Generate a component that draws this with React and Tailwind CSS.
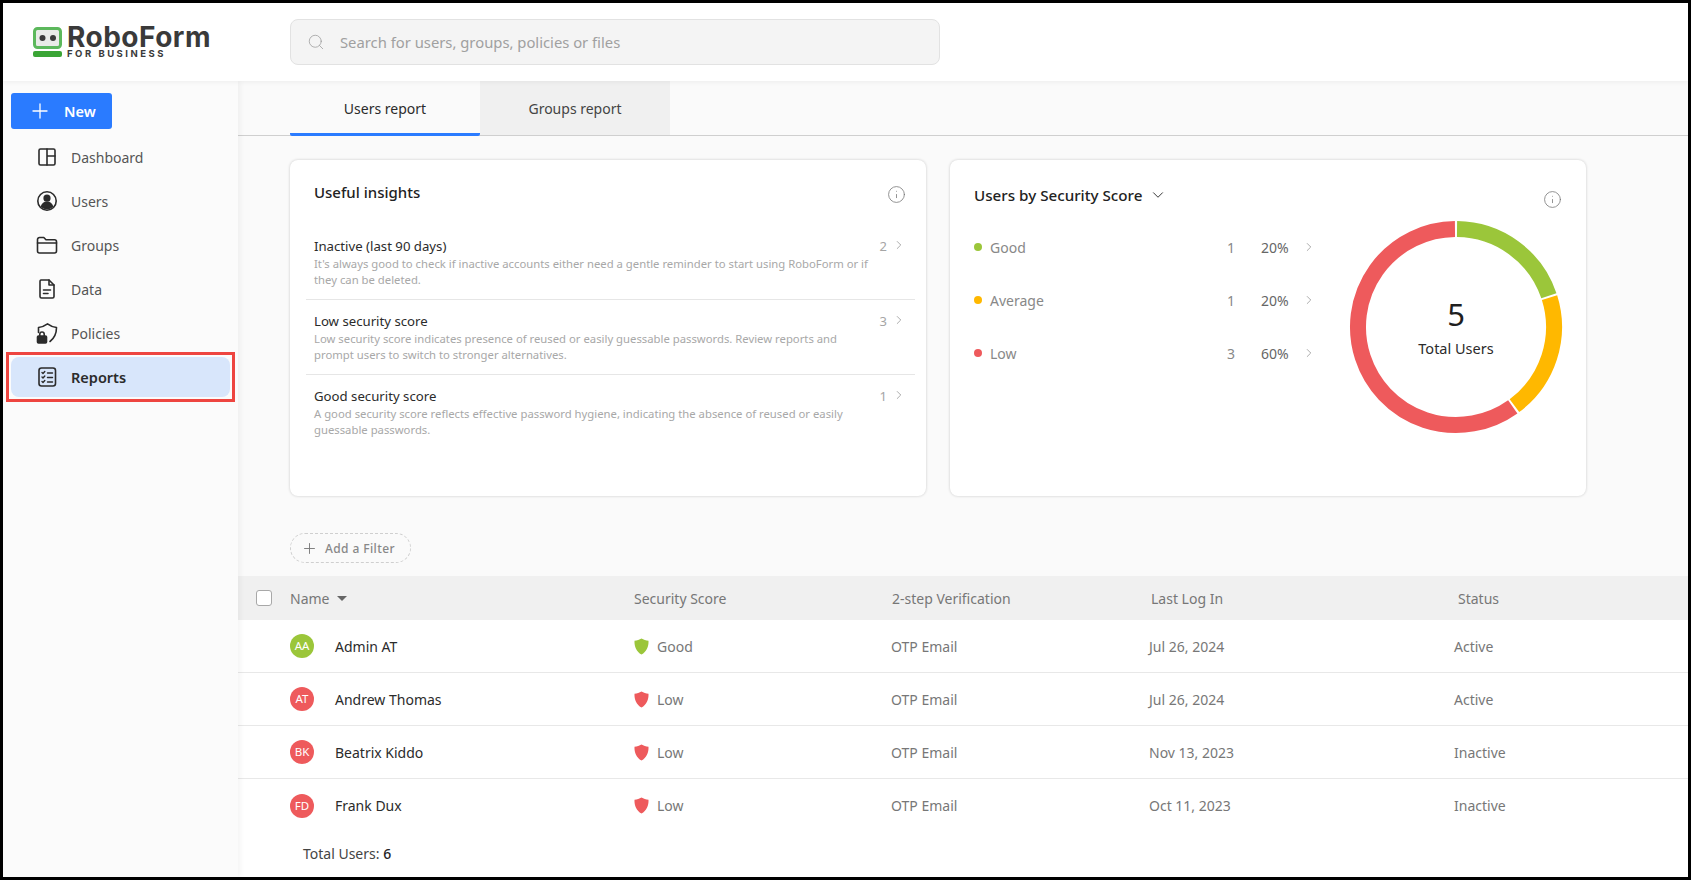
import { ChevronDown, ChevronRight, Info, Plus, Search } from 'lucide-react';

const insights = [
    { title: 'Inactive (last 90 days)', count: 2, text: "It's always good to check if inactive accounts either need a gentle reminder to start using RoboForm or if they can be deleted." },
    { title: 'Low security score', count: 3, text: 'Low security score indicates presence of reused or easily guessable passwords. Review reports and prompt users to switch to stronger alternatives.' },
    { title: 'Good security score', count: 1, text: 'A good security score reflects effective password hygiene, indicating the absence of reused or easily guessable passwords.' },
];

const scores = [
    { label: 'Good', count: 1, pct: '20%', dot: 'bg-[#9bc63a]' },
    { label: 'Average', count: 1, pct: '20%', dot: 'bg-[#ffb800]' },
    { label: 'Low', count: 3, pct: '60%', dot: 'bg-[#ee5a5c]' },
];

const users = [
    { initials: 'AA', name: 'Admin AT', score: 'Good', login: 'Jul 26, 2024', status: 'Active' },
    { initials: 'AT', name: 'Andrew Thomas', score: 'Low', login: 'Jul 26, 2024', status: 'Active' },
    { initials: 'BK', name: 'Beatrix Kiddo', score: 'Low', login: 'Nov 13, 2023', status: 'Inactive' },
    { initials: 'FD', name: 'Frank Dux', score: 'Low', login: 'Oct 11, 2023', status: 'Inactive' },
];

function Logo() {
    return (
        <div className="flex items-start gap-[4px]">
            <svg width="30" height="31" viewBox="0 0 30 31" className="mt-[1px]">
                <rect x="1.5" y="1.5" width="26" height="19" rx="3" fill="#e9ebe8" stroke="#5cb85c" strokeWidth="3" />
                <circle cx="9.5" cy="11" r="3" fill="#3a3a3a" />
                <circle cx="20" cy="11" r="3" fill="#3a3a3a" />
                <rect x="0" y="24" width="29" height="6" rx="2" fill="#3aa535" />
            </svg>
            <div className="flex flex-col">
                <span className="font-['Inter',sans-serif] text-[28px] leading-[23px] font-bold tracking-[0.5px] text-[#3a3a3a]">RoboForm</span>
                <span className="font-['Inter',sans-serif] text-[9.5px] leading-[9px] font-bold tracking-[2.5px] text-[#3a3a3a]">FOR BUSINESS</span>
            </div>
        </div>
    );
}

function NavIcon({ name }) {
    const common = { width: 24, height: 24, viewBox: '0 0 24 24', fill: 'none', stroke: '#2b2b2b', strokeWidth: 1.6, strokeLinecap: 'round', strokeLinejoin: 'round' };
    if (name === 'dashboard') {
        return (
            <svg {...common}>
                <rect x="4" y="4" width="16" height="16" rx="1.5" />
                <path d="M12 4v16M12 11h8" />
            </svg>
        );
    }
    if (name === 'users') {
        return (
            <svg {...common}>
                <circle cx="12" cy="12" r="9.2" />
                <circle cx="12" cy="9.2" r="2.8" fill="#2b2b2b" />
                <path d="M6.5 17.5c1-3 3-4.200 5.500-4.200s4.500 1.200 5.500 4.200c-1.500 1.400-3.400 2.200-5.500 2.200s-4-.8-5.500-2.200z" fill="#2b2b2b" />
            </svg>
        );
    }
    if (name === 'groups') {
        return (
            <svg {...common}>
                <path d="M2.500 18V6.500A2 2 0 0 1 4.500 4.500h4.300l2.200 2.300h8.500a2 2 0 0 1 2 2V18a2 2 0 0 1-2 2H4.500a2 2 0 0 1-2-2z" />
                <path d="M2.500 10h19" />
            </svg>
        );
    }
    if (name === 'data') {
        return (
            <svg {...common}>
                <path d="M6 3h8l5 5v11.500A1.500 1.500 0 0 1 17.500 21h-11A1.500 1.500 0 0 1 5 19.500v-15A1.500 1.500 0 0 1 6 3z" />
                <path d="M14 3v5h5M8.500 13h7M8.500 16.500h4.500" />
            </svg>
        );
    }
    if (name === 'policies') {
        return (
            <svg {...common}>
                <path d="M3.500 11.500V6.500C7 6 9.500 5 12.500 2.800 15.500 5 18 6 21.500 6.500c0 6-2 10.500-6.500 14" />
                <rect x="2.500" y="15" width="9" height="7" rx="1" fill="#2b2b2b" />
                <path d="M4.800 15v-1.800a2.200 2.200 0 0 1 4.400 0V15" />
            </svg>
        );
    }
    return (
        <svg {...common}>
            <rect x="4" y="3" width="16.500" height="18" rx="2.500" />
            <path d="M7 7.500l1 1 1.800-2M7 12l1 1 1.800-2M7 16.500l1 1 1.800-2M12.500 8h5M12.500 12.500h5M12.500 17h5" strokeWidth="1.400" />
        </svg>
    );
}

function Shield({ className }) {
    return (
        <svg width="15" height="17" viewBox="0 0 15 17" className={className}>
            <path d="M7.500 0.500C9.500 1.800 12 2.500 14.500 2.700c0.300 6-2 11-7 13.800C2.500 13.700 0.200 8.700 0.500 2.700 3 2.500 5.500 1.800 7.500 0.500z" fill="currentColor" />
        </svg>
    );
}

function arc(start, end, r = 98, c = 108) {
    const p = (a) => {
        const rad = (a * Math.PI) / 180;
        return `${(c + r * Math.sin(rad)).toFixed(2)} ${(c - r * Math.cos(rad)).toFixed(2)}`;
    };
    return `M${p(start)} A${r} ${r} 0 ${end - start > 180 ? 1 : 0} 1 ${p(end)}`;
}

function Donut() {
    return (
        <div className="relative w-[216px] h-[216px]">
            <svg width="216" height="216" viewBox="0 0 216 216" fill="none" strokeWidth="16">
                <path d={arc(0.6, 71.4)} stroke="#9bc63a" />
                <path d={arc(72.6, 143.4)} stroke="#ffb800" />
                <path d={arc(144.6, 359.4)} stroke="#ee5a5c" />
            </svg>
            <div className="absolute inset-0 flex flex-col items-center pt-[75px]">
                <span className="text-[31px] leading-[40px] text-[#1f1f1f]">5</span>
                <span className="text-[14.5px] leading-[20px] mt-[4px] text-[#2b2b2b]">Total Users</span>
            </div>
        </div>
    );
}

function Sidebar() {
    const items = [
        ['dashboard', 'Dashboard'],
        ['users', 'Users'],
        ['groups', 'Groups'],
        ['data', 'Data'],
        ['policies', 'Policies'],
    ];
    return (
        <aside className="w-[235px] shrink-0 bg-[#fbfbfb] shadow-[2px_0_6px_rgba(0,0,0,0.05)] z-10 pt-3 pl-[3px]">
            <button className="ml-[5px] w-[101px] h-9 bg-[#2a7bff] rounded-[3px] flex items-center text-white text-[14.5px] font-semibold">
                <Plus size={24} strokeWidth={1.3} className="ml-[17px]" />
                <span className="ml-[12px] mt-[1px]">New</span>
            </button>
            <nav className="mt-2 flex flex-col gap-1">
                {items.map(([icon, label]) => (
                    <a key={label} className="h-10 flex items-center pl-[29px] text-[14px] text-[#555]">
                        <NavIcon name={icon} />
                        <span className="ml-[12px]">{label}</span>
                    </a>
                ))}
                <div className="-my-[5px] border-[3px] border-[#ee4540] p-[2px] w-[229px]">
                    <a className="h-10 flex items-center pl-[24px] bg-[#d8e6fb] rounded-lg text-[14.5px] font-semibold text-[#2b2b2b]">
                        <NavIcon name="reports" />
                        <span className="ml-[12px] mt-[1px]">Reports</span>
                    </a>
                </div>
            </nav>
        </aside>
    );
}

function InsightsCard() {
    return (
        <section className="w-[636px] h-[336px] bg-white rounded-lg shadow-[0_0_3px_rgba(0,0,0,0.2)] pt-[21px] pl-[16px] pr-[11px] relative">
            <div className="flex justify-between pl-[8px]">
                <h2 className="text-[15px] leading-[22px] font-medium text-[#222]">Useful insights</h2>
                <Info size={19} strokeWidth={1} className="text-[#777] mt-[4px] mr-[9px]" />
            </div>
            <div className="mt-[21px]">
                {insights.map((item, i) => (
                    <div key={item.title} className={`h-[75px] pl-[8px] pr-[9px] pt-[12px] flex justify-between ${i < 2 ? 'border-b border-[#e6e6e6]' : ''}`}>
                        <div className="w-[556px]">
                            <div className="text-[13.2px] leading-[18px] text-[#2b2b2b]">{item.title}</div>
                            <p className="text-[11.3px] leading-[16px] text-[#a8a8a8] mt-[1px]">{item.text}</p>
                        </div>
                        <div className="flex items-start text-[13px] leading-[18px] text-[#a5a5a5]">
                            <span>{item.count}</span>
                            <ChevronRight size={14} strokeWidth={1.2} className="ml-[5px] mt-[1px] text-[#888]" />
                        </div>
                    </div>
                ))}
            </div>
        </section>
    );
}

function ScoreCard() {
    return (
        <section className="w-[636px] h-[336px] bg-white rounded-lg shadow-[0_0_3px_rgba(0,0,0,0.2)] pl-[24px] pr-[23px] pt-[24px] flex justify-between">
            <div>
                <div className="flex items-center">
                    <h2 className="text-[15.2px] leading-[22px] font-medium text-[#222]">Users by Security Score</h2>
                    <ChevronDown size={18} strokeWidth={1.3} className="ml-[7px] text-[#333]" />
                </div>
                <div className="mt-[31px] flex flex-col gap-[33px] w-[346px]">
                    {scores.map((s) => (
                        <div key={s.label} className="h-5 flex items-center text-[14px] text-[#888]">
                            <span className={`w-2 h-2 rounded-full ${s.dot}`} />
                            <span className="ml-2 w-[237px]">{s.label}</span>
                            <span className="w-[34px]">{s.count}</span>
                            <span className="w-[41px] text-[#666]">{s.pct}</span>
                            <ChevronRight size={14} strokeWidth={1.2} className="text-[#888]" />
                        </div>
                    ))}
                </div>
            </div>
            <div className="flex flex-col items-end">
                <Info size={19} strokeWidth={1} className="text-[#777] mt-[6px] mr-[1px]" />
                <div className="mt-[10px] mr-[-1px]">
                    <Donut />
                </div>
            </div>
        </section>
    );
}

function UsersTable() {
    return (
        <div className="flex-1 bg-white">
            <div className="h-11 bg-[#f0f0f0] grid grid-cols-[396px_258px_259px_307px_1fr] items-center text-[14px] text-[#777]">
                <div className="flex items-center pl-[18px]">
                    <span className="w-4 h-4 bg-white border border-[#a8a8a8] rounded-[3px]" />
                    <span className="ml-[18px]">Name</span>
                    <span className="ml-[8px] w-0 h-0 border-x-[5px] border-x-transparent border-t-[5px] border-t-[#666]" />
                </div>
                <div>Security Score</div>
                <div>2-step Verification</div>
                <div>Last Log In</div>
                <div>Status</div>
            </div>
            {users.map((u, i) => (
                <div key={u.name} className={`h-[53px] grid grid-cols-[396px_257px_258px_305px_1fr] items-center text-[14px] text-[#777] ${i < 3 ? 'border-b border-[#e8e8e8]' : ''}`}>
                    <div className="flex items-center pl-[52px]">
                        <span className={`w-6 h-6 rounded-full flex items-center justify-center text-[11.5px] text-white ${u.score === 'Good' ? 'bg-[#9bc63a]' : 'bg-[#ee5a5c]'}`}>{u.initials}</span>
                        <span className="ml-[21px] text-[#2b2b2b]">{u.name}</span>
                    </div>
                    <div className="flex items-center">
                        <Shield className={u.score === 'Good' ? 'text-[#9bc63a]' : 'text-[#ee5a5c]'} />
                        <span className="ml-[8px]">{u.score}</span>
                    </div>
                    <div>OTP Email</div>
                    <div>{u.login}</div>
                    <div>{u.status}</div>
                </div>
            ))}
            <div className="pl-[65px] mt-[12px] text-[14px] leading-[20px] text-[#444]">
                Total Users: <span className="font-medium text-[#222]">6</span>
            </div>
        </div>
    );
}

export default function App() {
    return (
        <div className="h-[880px] border-[3px] border-black overflow-hidden flex flex-col bg-[#fafafa] font-['Noto_Sans',sans-serif]">
            <header className="h-[78px] shrink-0 bg-white flex items-center shadow-[0_1px_5px_rgba(0,0,0,0.06)] z-20 relative">
                <div className="w-[287px] pl-[30px] shrink-0">
                    <Logo />
                </div>
                <div className="w-[650px] h-[46px] bg-[#f4f4f4] border border-[#e2e2e2] rounded-lg flex items-center pl-[16px] text-[14.8px] text-[#a0a0a0]">
                    <Search size={18} strokeWidth={1} className="text-[#999]" />
                    <span className="ml-[15px] mt-[1px]">Search for users, groups, policies or files</span>
                </div>
            </header>
            <div className="flex-1 flex min-h-0">
                <Sidebar />
                <main className="flex-1 flex flex-col min-w-0">
                    <div className="h-[55px] shrink-0 border-b border-[#cfcfcf] pl-[52px] flex">
                        <div className="w-[190px] pt-[3px] flex items-center justify-center text-[14px] text-[#2b2b2b] border-b-[3px] border-[#2a7bff] rounded-b-[2px] -mb-px">Users report</div>
                        <div className="w-[190px] flex items-center justify-center text-[14px] text-[#444] bg-[#f0f0f0]">Groups report</div>
                    </div>
                    <div className="shrink-0 pl-[52px] pt-[24px] flex gap-[24px]">
                        <InsightsCard />
                        <ScoreCard />
                    </div>
                    <div className="shrink-0 pl-[52px] pt-[37px] pb-[13px]">
                        <button className="w-[121px] h-[30px] rounded-full border border-dashed border-[#cfcfcf] flex items-center pl-[10px] text-[12px] font-medium tracking-[0.4px] text-[#888]">
                            <Plus size={17} strokeWidth={1.3} className="text-[#777]" />
                            <span className="ml-[7px] mt-[1px]">Add a Filter</span>
                        </button>
                    </div>
                    <UsersTable />
                </main>
            </div>
        </div>
    );
}
